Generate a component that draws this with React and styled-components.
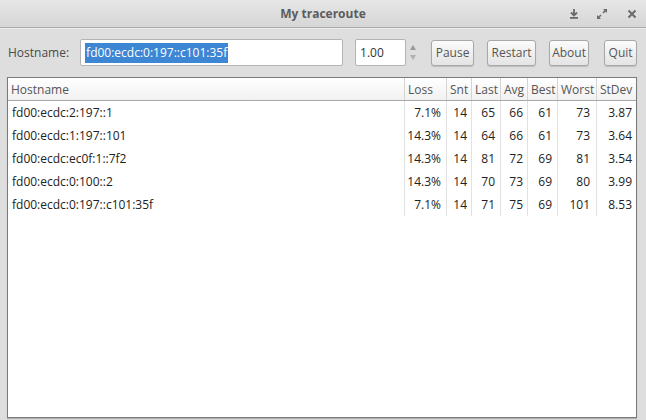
import React from "react";
import styled, { createGlobalStyle } from "styled-components";

const Global = createGlobalStyle`
  html, body { margin: 0; padding: 0; background: #dedede; }
  body { font-family: "Open Sans", "Noto Sans", sans-serif; }
  * { box-sizing: border-box; }
`;

const Window = styled.div`
  width: 646px;
  height: 420px;
  display: flex;
  flex-direction: column;
  background: #dedede;
  overflow: hidden;
`;

const TitleBar = styled.div`
  height: 28px;
  flex: none;
  display: flex;
  align-items: center;
  justify-content: center;
  position: relative;
  background: linear-gradient(#e6e6e6, #d6d6d6);
  border-bottom: 1px solid #a9a9a9;
  box-shadow: 0 1px 0 #ececec;
`;

const Title = styled.span`
  font-size: 12px;
  font-weight: 700;
  color: #5c5c5c;
`;

const TitleIcons = styled.div`
  position: absolute;
  right: 9px;
  top: 0;
  height: 27px;
  display: flex;
  align-items: center;
  gap: 11px;
`;

const Toolbar = styled.div`
  display: flex;
  align-items: center;
  padding: 11px 10px 11px 8px;
  flex: none;
`;

const Label = styled.span`
  font-size: 12px;
  color: #4a4a4a;
  margin-right: 11px;
  flex: none;
`;

const TextInput = styled.div`
  width: 263px;
  height: 27px;
  flex: none;
  background: #fff;
  border: 1px solid #b4b4b4;
  border-radius: 2px;
  display: flex;
  align-items: center;
  padding-left: 4px;
  margin-right: 12px;
`;

const Selected = styled.span`
  background: #3d86d4;
  color: #fff;
  font-size: 12px;
  line-height: 20px;
  padding: 0 1px;
`;

const Spin = styled.div`
  width: 64px;
  height: 27px;
  flex: none;
  display: flex;
  margin-right: 12px;
`;

const SpinField = styled.div`
  width: 51px;
  background: #fff;
  border: 1px solid #b4b4b4;
  border-radius: 2px;
  display: flex;
  align-items: center;
  padding-left: 4px;
  font-size: 12px;
  color: #333;
`;

const SpinArrows = styled.div`
  flex: 1;
  display: flex;
  flex-direction: column;
  align-items: center;
  justify-content: center;
  gap: 5px;
`;

const Button = styled.button`
  height: 26px;
  width: ${(p) => p.$w}px;
  flex: none;
  padding: 0;
  margin-left: ${(p) => p.$gap}px;
  background: linear-gradient(#fbfbfb, #e4e4e4);
  border: 1px solid #a8a8a8;
  border-radius: 3px;
  box-shadow: 0 1px 1px rgba(0,0,0,0.15);
  font-family: inherit;
  font-size: 12px;
  color: #555;
`;

const TablePanel = styled.div`
  flex: 1;
  margin: 0 9px 2px 7px;
  background: #fff;
  border: 1px solid #7b7b7b;
  box-shadow: 0 1px 1px rgba(0,0,0,0.2);
  overflow: hidden;
`;

const cols = "396px 42px 25px 29px 27px 30px 39px 40px";

const HeaderRow = styled.div`
  display: grid;
  grid-template-columns: ${cols};
  height: 23px;
  background: linear-gradient(#ffffff, #f1f1f1);
  border-bottom: 1px solid #a9a9a9;
`;

const HeadCell = styled.div`
  font-size: 12px;
  color: #555;
  display: flex;
  align-items: center;
  padding: 0 3px;
  border-left: ${(p) => (p.$first ? "none" : "1px solid #d4d4d4")};
  white-space: nowrap;
  overflow: hidden;
`;

const Row = styled.div`
  display: grid;
  grid-template-columns: ${cols};
  height: 23px;
`;

const Cell = styled.div`
  font-size: 12px;
  color: #222;
  display: flex;
  align-items: center;
  justify-content: ${(p) => (p.$first ? "flex-start" : "flex-end")};
  padding: ${(p) => (p.$first ? "0 4px" : `0 ${p.$pad}px 0 0`)};
  border-left: ${(p) => (p.$first ? "none" : "1px solid #e2e2e2")};
  white-space: nowrap;
`;

const headers = ["Hostname", "Loss", "Snt", "Last", "Avg", "Best", "Worst", "StDev"];
const rows = [
  ["fd00:ecdc:2:197::1", "7.1%", "14", "65", "66", "61", "73", "3.87"],
  ["fd00:ecdc:1:197::101", "14.3%", "14", "64", "66", "61", "73", "3.64"],
  ["fd00:ecdc:ec0f:1::7f2", "14.3%", "14", "81", "72", "69", "81", "3.54"],
  ["fd00:ecdc:0:100::2", "14.3%", "14", "70", "73", "69", "80", "3.99"],
  ["fd00:ecdc:0:197::c101:35f", "7.1%", "14", "71", "75", "69", "101", "8.53"],
];

const cellPad = [0, 5, 4, 5, 4, 5, 6, 4];

export default function App() {
  return (
    <>
      <Global />
      <Window>
        <TitleBar>
          <Title>My traceroute</Title>
          <TitleIcons>
            <svg width="10" height="10" viewBox="0 0 10 10">
              <path d="M5 0v6M2 3.5L5 6.5L8 3.5" stroke="#6a6a6a" strokeWidth="1.8" fill="none" />
              <rect x="1" y="8" width="8" height="1.8" fill="#6a6a6a" />
            </svg>
            <svg width="12" height="12" viewBox="0 0 12 12" style={{ marginLeft: 6 }}>
              <path d="M7 1h4v4z M1 7v4h4z" fill="#6a6a6a" />
              <path d="M10 2L7 5M2 10l3-3" stroke="#6a6a6a" strokeWidth="1.6" />
            </svg>
            <svg width="10" height="10" viewBox="0 0 10 10" style={{ marginLeft: 8 }}>
              <path d="M1.5 1.5l7 7M8.5 1.5l-7 7" stroke="#6a6a6a" strokeWidth="2" />
            </svg>
          </TitleIcons>
        </TitleBar>
        <Toolbar>
          <Label>Hostname:</Label>
          <TextInput>
            <Selected>fd00:ecdc:0:197::c101:35f</Selected>
          </TextInput>
          <Spin>
            <SpinField>1.00</SpinField>
            <SpinArrows>
              <svg width="6" height="5" viewBox="0 0 6 5"><path d="M3 0L6 5H0z" fill="#9a9a9a" /></svg>
              <svg width="6" height="5" viewBox="0 0 6 5"><path d="M0 0H6L3 5z" fill="#b0b0b0" /></svg>
            </SpinArrows>
          </Spin>
          <Button $gap={0} $w={43}>Pause</Button>
          <Button $gap={13} $w={49}>Restart</Button>
          <Button $gap={13} $w={40}>About</Button>
          <Button $gap={15} $w={33}>Quit</Button>
        </Toolbar>
        <TablePanel>
          <HeaderRow>
            {headers.map((h, i) => (
              <HeadCell key={h} $first={i === 0}>{h}</HeadCell>
            ))}
          </HeaderRow>
          {rows.map((r) => (
            <Row key={r[0]}>
              {r.map((c, i) => (
                <Cell key={i} $first={i === 0} $pad={cellPad[i]}>
                  {c}
                </Cell>
              ))}
            </Row>
          ))}
        </TablePanel>
      </Window>
    </>
  );
}
